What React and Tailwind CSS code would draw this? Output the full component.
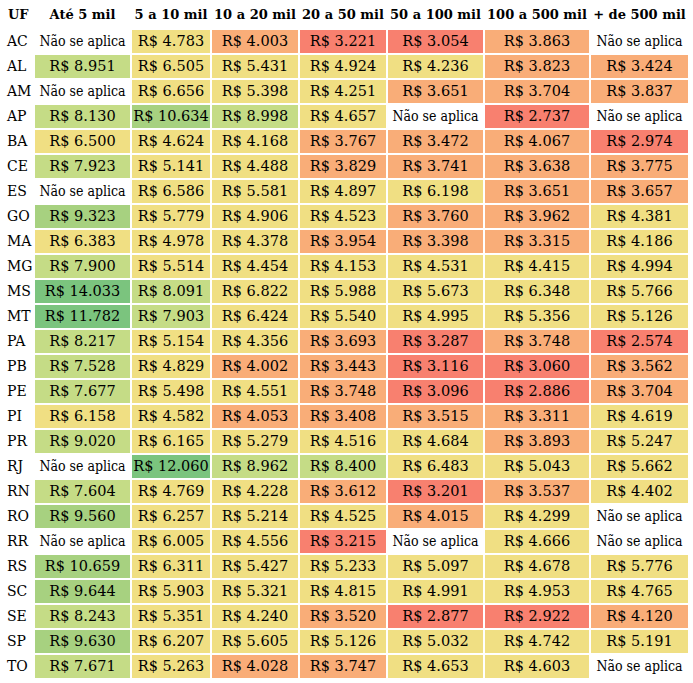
const cols = ["Até 5 mil", "5 a 10 mil", "10 a 20 mil", "20 a 50 mil", "50 a 100 mil", "100 a 500 mil", "+ de 500 mil"];

// null = "Não se aplica"
const rows = [
  ["AC", [null, 4783, 4003, 3221, 3054, 3863, null]],
  ["AL", [8951, 6505, 5431, 4924, 4236, 3823, 3424]],
  ["AM", [null, 6656, 5398, 4251, 3651, 3704, 3837]],
  ["AP", [8130, 10634, 8998, 4657, null, 2737, null]],
  ["BA", [6500, 4624, 4168, 3767, 3472, 4067, 2974]],
  ["CE", [7923, 5141, 4488, 3829, 3741, 3638, 3775]],
  ["ES", [null, 6586, 5581, 4897, 6198, 3651, 3657]],
  ["GO", [9323, 5779, 4906, 4523, 3760, 3962, 4381]],
  ["MA", [6383, 4978, 4378, 3954, 3398, 3315, 4186]],
  ["MG", [7900, 5514, 4454, 4153, 4531, 4415, 4994]],
  ["MS", [14033, 8091, 6822, 5988, 5673, 6348, 5766]],
  ["MT", [11782, 7903, 6424, 5540, 4995, 5356, 5126]],
  ["PA", [8217, 5154, 4356, 3693, 3287, 3748, 2574]],
  ["PB", [7528, 4829, 4002, 3443, 3116, 3060, 3562]],
  ["PE", [7677, 5498, 4551, 3748, 3096, 2886, 3704]],
  ["PI", [6158, 4582, 4053, 3408, 3515, 3311, 4619]],
  ["PR", [9020, 6165, 5279, 4516, 4684, 3893, 5247]],
  ["RJ", [null, 12060, 8962, 8400, 6483, 5043, 5662]],
  ["RN", [7604, 4769, 4228, 3612, 3201, 3537, 4402]],
  ["RO", [9560, 6257, 5214, 4525, 4015, 4299, null]],
  ["RR", [null, 6005, 4556, 3215, null, 4666, null]],
  ["RS", [10659, 6311, 5427, 5233, 5097, 4678, 5776]],
  ["SC", [9644, 5903, 5321, 4815, 4991, 4953, 4765]],
  ["SE", [8243, 5351, 4240, 3520, 2877, 2922, 4120]],
  ["SP", [9630, 6207, 5605, 5126, 5032, 4742, 5191]],
  ["TO", [7671, 5263, 4028, 3747, 4653, 4603, null]],
];

// faixas de cor
function colorFor(v) {
  if (v == null) return "bg-white";
  if (v < 3300) return "bg-[#f8806f]";
  if (v < 4130) return "bg-[#f9ad78]";
  if (v < 7000) return "bg-[#f0df83]";
  if (v < 9300) return "bg-[#c5dc86]";
  if (v < 11000) return "bg-[#a7d180]";
  return "bg-[#7bc47e]";
}

const fmt = (v) => "R$ " + v.toLocaleString("pt-BR");

export default function App() {
  return (
    <div className="w-[693px] h-[683px] bg-white text-black font-['DejaVu_Serif',serif]">
      <div className="grid grid-cols-[31px_95px_78px_86px_86px_95px_104px_97px] grid-rows-[26px] auto-rows-[23px] gap-[2px] p-[2px]">
        <div className="flex items-center pl-[6px] text-[13px] font-bold">UF</div>
        {cols.map((c) => (
          <div key={c} className="flex items-center justify-center text-[13px] font-bold whitespace-nowrap">
            {c}
          </div>
        ))}
        {rows.map(([uf, vals]) => (
          <>
            <div key={uf} className="flex items-center pl-[5px] text-[14px]">{uf}</div>
            {vals.map((v, i) =>
              v == null ? (
                <div
                  key={uf + i}
                  className="flex items-center justify-center whitespace-nowrap bg-white text-[14px] font-['DejaVu_Serif_Condensed','DejaVu_Serif',serif] [font-stretch:condensed]"
                >
                  Não se aplica
                </div>
              ) : (
                <div
                  key={uf + i}
                  className={`flex items-center justify-center whitespace-nowrap text-[14.5px] ${colorFor(v)}`}
                >
                  {fmt(v)}
                </div>
              )
            )}
          </>
        ))}
      </div>
    </div>
  );
}
